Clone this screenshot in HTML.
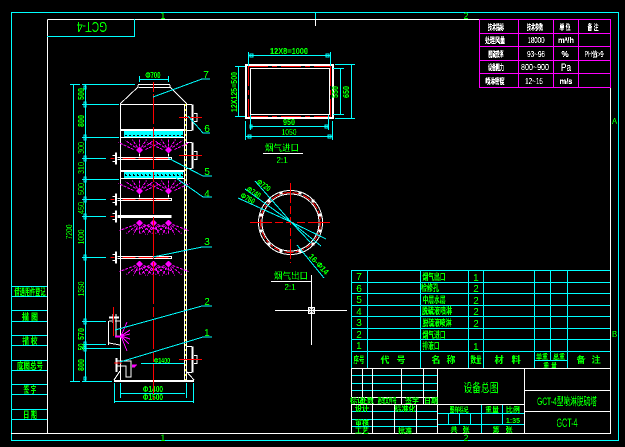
<!DOCTYPE html>
<html><head><meta charset="utf-8"><style>
html,body{margin:0;padding:0;background:#000;width:625px;height:447px;overflow:hidden}
svg{display:block}
.c{stroke:#0ff}.w{stroke:#fff}.r{stroke:#f00}.m{stroke:#f0f}
path,line,rect,circle{fill:none;stroke-width:1;shape-rendering:crispEdges}
text{font-family:"Liberation Sans","Noto Sans CJK SC",sans-serif;text-anchor:middle;font-size:9px}
.g{fill:#0f0}.gb{fill:#0f0;font-weight:bold}.wt{fill:#fff;font-weight:bold;font-size:8px}.wn{fill:#fff;font-size:8px}
</style></head><body>
<svg width="625" height="447" viewBox="0 0 625 447" xmlns="http://www.w3.org/2000/svg">
<defs>
<filter id="a" x="0" y="0" width="625" height="447" filterUnits="userSpaceOnUse" color-interpolation-filters="sRGB">
<feComponentTransfer><feFuncA type="discrete" tableValues="0 0 1 1 1"/></feComponentTransfer></filter>
<g id="fu"><path class="m" d="M-6-2L-21-9M-4-4L-14-11M-2-4L-7-12M0-5V-13M2-4L7-12M4-4L14-11M6-2L21-9" stroke-dasharray="3 1"/><path class="m" d="M-3-1H3M-3-2H3M-2 0H2M-2-3H2M-1 1H1M-1-4H1"/><path class="w" d="M0 2V5"/></g>
<g id="fd"><path class="m" d="M-4 3L-20 9M-3 4L-13 12M-2 5L-6 13M0 5V13M2 5L6 13M3 4L13 12M4 3L20 9" stroke-dasharray="3 1"/><path class="m" d="M-3 1H3M-3 2H3M-2 0H2M-2 3H2M-1-1H1M-1 4H1"/></g>
<g id="flange"><path class="w" d="M0 0H6M0 26H6M6 0V26M7 0V26M8 9H11V17H8"/><path class="r" d="M-7 13H16"/></g>
<g id="pipe"><path class="w" d="M115-6V6M116-6V6M112-3H115M112 3H115"/><path class="r" d="M110 0H114"/><path class="w" d="M117-1H171V1H117M171-1V1M120-3V-1M120 1V3"/><path class="r" d="M122 0H135M138 0H152M155 0H168"/></g>
<g id="pipew"><path class="w" d="M115-6V6M116-6V6M112-3H115M112 3H115"/><path class="r" d="M110 0H114"/><path class="w" d="M117-1H171M117 0H171M117 1H171M120-3V-1M120 1V3"/></g>
</defs>

<!-- frames -->
<rect class="c" x="11.5" y="12.5" width="607" height="428"/>
<path class="w" d="M47.5 19.5H610.5V433.5H11"/><path class="w" d="M47.5 19.5V433.5"/>
<path class="c" d="M47 36.5H134.5V19"/>
<path class="c" d="M315.5 12V19"/><path class="w" d="M315.5 19V26"/>

<g filter="url(#a)">
<text class="g" x="163" y="19">1</text>
<text class="g" x="466" y="19">2</text>
<text class="g" x="163" y="441">1</text>
<text class="g" x="466" y="441">2</text>
<text class="g" x="614.5" y="124" style="font-size:8px">A</text>
<text class="g" x="614.5" y="337" style="font-size:8px">B</text>
<text class="g" transform="translate(92,22) rotate(180)" style="font-size:15px" textLength="30" lengthAdjust="spacingAndGlyphs">GCT-4</text>
</g>

<!-- magenta table -->
<path class="m" d="M479.5 19.5H610.5V87.5H479.5ZM479 33.5H610M479 46.5H610M479 60.5H610M479 73.5H610M518.5 19V87M553.5 19V87M578.5 19V87"/>
<g filter="url(#a)">
<text class="wt" x="496" y="30" textLength="16" lengthAdjust="spacingAndGlyphs">技术指标</text><text class="wt" x="535" y="30" textLength="16" lengthAdjust="spacingAndGlyphs">技术参数</text><text class="wt" x="565" y="30" textLength="11" lengthAdjust="spacingAndGlyphs">单 位</text><text class="wt" x="593" y="30" textLength="11" lengthAdjust="spacingAndGlyphs">备 注</text>
<text class="wt" x="495" y="43" textLength="20" lengthAdjust="spacingAndGlyphs">处理风量</text><text class="wn" x="536" y="43" textLength="17" lengthAdjust="spacingAndGlyphs">18000</text><text class="wn" x="566" y="43" style="font-weight:bold" textLength="16" lengthAdjust="spacingAndGlyphs">m³/h</text>
<text class="wt" x="496" y="57" textLength="15" lengthAdjust="spacingAndGlyphs">脱硫效率</text><text class="wn" x="536" y="57" textLength="18" lengthAdjust="spacingAndGlyphs">93~96</text><text class="wt" x="565" y="57">%</text><text class="wn" x="594" y="57" textLength="19" lengthAdjust="spacingAndGlyphs">PH值&gt;9</text>
<text class="wt" x="496" y="70" textLength="16" lengthAdjust="spacingAndGlyphs">设备阻力</text><text class="wn" x="535" y="70" textLength="28" lengthAdjust="spacingAndGlyphs">800~900</text><text class="wn" x="566" y="71" style="font-size:11px" textLength="10" lengthAdjust="spacingAndGlyphs">Pa</text>
<text class="wt" x="495" y="84" textLength="19" lengthAdjust="spacingAndGlyphs">喷淋密度</text><text class="wn" x="534" y="84" textLength="18" lengthAdjust="spacingAndGlyphs">12~15</text><text class="wn" x="566" y="84" style="font-weight:bold" textLength="13" lengthAdjust="spacingAndGlyphs">m/s</text>
</g>

<!-- rectangular flange -->
<path class="w" d="M245.5 64.5H333.5V118.5H245.5ZM246.5 65.5H332.5V117.5H246.5Z"/>
<path class="r" d="M248 66.5H330M248 116.5H330M248.5 66V117M330.5 66V117" stroke-dasharray="20 4 5 4"/>
<rect class="w" x="250.5" y="68.5" width="79" height="46"/>
<path class="c" d="M248.5 52V66M330.5 52V66M248 55.5H330M250.5 115V130M328.5 115V130M250 126.5H329M245.5 121V140M332.5 121V140M245 136.5H333M235 66.5H245M235 116.5H245M238.5 66V116M333 68.5H344M333 114.5H344M340.5 68V114M335 64.5H355M335 118.5H355M351.5 64V118"/>
<path class="c" d="M250 54h3v3h-3zM326 54h3v3h-3zM250 125h2v3h-2zM325 125h3v3h-3zM248 135h3v3h-3zM328 135h3v3h-3z"/>
<g filter="url(#a)">
<text class="g" x="289" y="54" textLength="38" lengthAdjust="spacingAndGlyphs" style="font-size:8px;font-weight:bold">12X8=1000</text>
<text class="g" x="289" y="125" textLength="12" lengthAdjust="spacingAndGlyphs" style="font-size:8px;font-weight:bold">950</text>
<text class="g" x="289" y="135" textLength="15" lengthAdjust="spacingAndGlyphs" style="font-size:8px">1050</text>
<text class="g" transform="translate(237,92) rotate(-90)" textLength="40" lengthAdjust="spacingAndGlyphs" style="font-size:8px;font-weight:bold">12X125=500</text>
<text class="g" transform="translate(338,92) rotate(-90)" textLength="12" lengthAdjust="spacingAndGlyphs" style="font-size:8px;font-weight:bold">550</text>
<text class="g" transform="translate(349,92) rotate(-90)" textLength="12" lengthAdjust="spacingAndGlyphs" style="font-size:8px;font-weight:bold">650</text>
<text class="g" x="282" y="151" textLength="34" lengthAdjust="spacingAndGlyphs" style="font-size:9px">烟气进口</text>
<text class="g" x="282" y="163" style="font-size:8px">2:1</text>
<text class="g" x="291" y="279" textLength="34" lengthAdjust="spacingAndGlyphs" style="font-size:9px">烟气出口</text>
<text class="g" x="290" y="290" style="font-size:8px">2:1</text>
</g>
<path class="w" d="M263 153.5H303M271 281.5H311"/>

<!-- circle -->
<circle class="r" cx="290.5" cy="222.5" r="30" stroke-dasharray="9 2"/>
<circle class="w" cx="290.5" cy="222.5" r="32"/>
<circle class="w" cx="290.5" cy="222.5" r="28.5"/>
<path class="w" d="M260 214h2v2h-2zM268 200h2v2h-2zM280 192h2v2h-2zM299 192h2v2h-2zM312 200h2v2h-2zM319 214h2v2h-2zM319 230h2v2h-2zM312 243h2v2h-2zM299 250h2v2h-2zM280 250h2v2h-2zM268 243h2v2h-2zM260 230h2v2h-2z" style="fill:#fff"/>
<path class="r" d="M250 222.5H330" stroke-dasharray="22 3 8 3 8 3 8 3"/>
<path class="r" d="M290.5 183V263" stroke-dasharray="20 3 8 3 8 3 8 3"/>
<path class="c" d="M255 181L291 222M245 189L291 222M238 198L291 222M291 222L326 239M291 222L321 246M297 245L324 278M291 222L311 243"/>
<g filter="url(#a)">
<text class="g" transform="translate(264,185) rotate(35)" y="3" textLength="15" lengthAdjust="spacingAndGlyphs" style="font-size:8px;font-weight:bold">Φ720</text>
<text class="g" transform="translate(254,192) rotate(32)" y="3" textLength="15" lengthAdjust="spacingAndGlyphs" style="font-size:8px;font-weight:bold">Φ740</text>
<text class="g" transform="translate(248,198) rotate(28)" y="3" textLength="15" lengthAdjust="spacingAndGlyphs" style="font-size:8px;font-weight:bold">Φ760</text>
<text class="g" transform="translate(319,264) rotate(47)" y="3" textLength="25" lengthAdjust="spacingAndGlyphs" style="font-size:8px;font-weight:bold">16-Φ14</text>
</g>

<!-- crosshair -->
<path class="w" d="M311.5 275V345M275 310.5H347"/>
<rect class="w" x="308.5" y="307.5" width="6" height="6"/>
<circle class="w" cx="311.5" cy="310.5" r="2"/>

<!-- bottom-right table -->
<path class="c" d="M351.5 270.5H610M351.5 282.5H610M351.5 293.5H610M351.5 305.5H610M351.5 316.5H610M351.5 328.5H610M351.5 339.5H610M351.5 351.5H610M534 360.5H567M351.5 270V368M367.5 270V368M420.5 270V368M468.5 270V368M483.5 270V368M534.5 270V368M550.5 270V360M567.5 270V368"/>
<g filter="url(#a)" style="font-size:10px">
<text class="g" x="359" y="280" style="font-size:10px">7</text><text class="g" x="359" y="292" style="font-size:10px">6</text><text class="g" x="359" y="303" style="font-size:10px">5</text><text class="g" x="359" y="315" style="font-size:10px">4</text><text class="g" x="359" y="326" style="font-size:10px">3</text><text class="g" x="359" y="338" style="font-size:10px">2</text><text class="g" x="359" y="349" style="font-size:10px">1</text>
<text class="g" x="476" y="281" style="font-size:10px">1</text><text class="g" x="476" y="292" style="font-size:10px">2</text><text class="g" x="476" y="304" style="font-size:10px">2</text><text class="g" x="476" y="315" style="font-size:10px">2</text><text class="g" x="476" y="327" style="font-size:10px">2</text><text class="g" x="476" y="350" style="font-size:10px">1</text>
<text class="gb" x="434" y="280" textLength="23" lengthAdjust="spacingAndGlyphs">烟气出口</text>
<text class="gb" x="430" y="291" textLength="18" lengthAdjust="spacingAndGlyphs">检修孔</text>
<text class="gb" x="434" y="303" textLength="23" lengthAdjust="spacingAndGlyphs">中层水层</text>
<text class="gb" x="437" y="314" textLength="30" lengthAdjust="spacingAndGlyphs">脱硫液喷淋</text>
<text class="gb" x="437" y="326" textLength="29" lengthAdjust="spacingAndGlyphs">脱硫液喷淋</text>
<text class="gb" x="434" y="338" textLength="23" lengthAdjust="spacingAndGlyphs">烟气进口</text>
<text class="gb" x="431" y="349" textLength="17" lengthAdjust="spacingAndGlyphs">排液口</text>
<text class="gb" x="359" y="363" textLength="11" lengthAdjust="spacingAndGlyphs">序号</text>
<text class="gb" x="385" y="363">代</text><text class="gb" x="401" y="363">号</text>
<text class="gb" x="436" y="363">名</text><text class="gb" x="451" y="363">称</text>
<text class="gb" x="476" y="363" textLength="11" lengthAdjust="spacingAndGlyphs">数量</text>
<text class="gb" x="499" y="363">材</text><text class="gb" x="516" y="363">料</text>
<text class="gb" x="542" y="359" textLength="12" lengthAdjust="spacingAndGlyphs" style="font-size:7px">单重</text><text class="gb" x="559" y="359" textLength="12" lengthAdjust="spacingAndGlyphs" style="font-size:7px">总重</text>
<text class="gb" x="550" y="368" textLength="14" lengthAdjust="spacingAndGlyphs" style="font-size:7px">重 量</text>
<text class="gb" x="581" y="363">备</text><text class="gb" x="596" y="363">注</text>
</g>

<!-- title block -->
<path class="c" d="M351 375.5H437M351 383.5H437M351 390.5H437M351 411.5H437M351 419.5H437M351 426.5H437M437 413.5H524M437 424.5H524M481.5 404V433M502.5 404V424M448.5 413V424M459.5 413V424M470.5 413V424"/>
<path class="w" d="M351 368.5H610M351.5 368V433M437.5 368V433M524.5 368V433M351 404.5H524M351 397.5H437M524 390.5H610M524 411.5H610M610.5 368V433M362.5 368V404M372.5 368V433M401.5 368V404M423.5 368V404M394.5 404V433M416.5 404V433"/>
<g filter="url(#a)">
<text class="g" x="481" y="392" style="font-size:12px" textLength="35" lengthAdjust="spacingAndGlyphs">设备总图</text>
<text class="g" x="567" y="405" textLength="60" lengthAdjust="spacingAndGlyphs" style="font-size:11px">GCT-4型喷淋脱硫塔</text>
<text class="g" x="567" y="427" textLength="21" lengthAdjust="spacingAndGlyphs" style="font-size:12px">GCT-4</text>
<text class="gb" x="357" y="403" style="font-size:7px">标记</text><text class="gb" x="367" y="403" style="font-size:7px">处数</text>
<text class="gb" x="387" y="403" style="font-size:7px" textLength="19" lengthAdjust="spacingAndGlyphs">更改文件号</text><text class="gb" x="412" y="403" style="font-size:7px">签字</text><text class="gb" x="431" y="403" style="font-size:7px">日期</text>
<text class="gb" x="362" y="411" style="font-size:7px">设计</text><text class="gb" x="405" y="411" style="font-size:7px">标准化</text>
<text class="gb" x="362" y="425" style="font-size:7px">审核</text><text class="gb" x="362" y="433" style="font-size:7px">工艺</text><text class="gb" x="405" y="433" style="font-size:7px">批准</text>
<text class="gb" x="459" y="412" style="font-size:7px" textLength="19" lengthAdjust="spacingAndGlyphs">图样标记</text><text class="gb" x="492" y="412" style="font-size:7px">重量</text><text class="gb" x="513" y="412" style="font-size:7px">比例</text>
<text class="g" x="513" y="423" style="font-size:7px;font-weight:bold">1:35</text>
<text class="gb" x="454" y="432" style="font-size:7px">共</text><text class="gb" x="466" y="432" style="font-size:7px">张</text><text class="gb" x="496" y="432" style="font-size:7px">第</text><text class="gb" x="509" y="432" style="font-size:7px">张</text>
</g>

<!-- left strip -->
<path class="c" d="M11 286.5H47M11 296.5H47M11 310.5H47M11 321.5H47M11 335.5H47M11 345.5H47M11 360.5H47M11 370.5H47M11 384.5H47M11 394.5H47M11 409.5H47M11 419.5H47"/>
<g filter="url(#a)">
<text class="gb" x="30" y="295" textLength="31" lengthAdjust="spacingAndGlyphs">借通用件登记</text>
<text class="gb" x="30" y="320" textLength="16" lengthAdjust="spacingAndGlyphs">描 图</text>
<text class="gb" x="30" y="344" textLength="15" lengthAdjust="spacingAndGlyphs">描 校</text>
<text class="gb" x="30" y="369" textLength="26" lengthAdjust="spacingAndGlyphs">底图总号</text>
<text class="gb" x="30" y="393" textLength="13" lengthAdjust="spacingAndGlyphs">签 字</text>
<text class="gb" x="30" y="418" textLength="14" lengthAdjust="spacingAndGlyphs">日 期</text>
</g>

<!-- tower dims -->
<path class="c" d="M70 84.5H80M82 84.5H135M73.5 84V381M85.5 84V381M82 104.5H119M82 137.5H119M82 158.5H106M82 179.5H119M82 199.5H106M82 216.5H106M82 257.5H106M82 321.5H106M82 344.5H106M82 348.5H120M70 381.5H80M82 381.5H112"/>
<path class="c" d="M84 86h2v3h-2zM84 102h2v5h-2zM84 135h2v5h-2zM84 156h2v5h-2zM84 177h2v5h-2zM84 197h2v5h-2zM84 214h2v5h-2zM84 255h2v5h-2zM84 319h2v5h-2zM84 342h2v5h-2zM84 346h2v5h-2zM84 377h2v3h-2z"/>
<path class="c" d="M139.5 76V82M168.5 76V82M140 79.5H168"/>
<g filter="url(#a)">
<text class="gb" transform="translate(84,94) rotate(-90)" textLength="12" lengthAdjust="spacingAndGlyphs" style="font-size:8px">500</text>
<text class="gb" transform="translate(84,121) rotate(-90)" textLength="12" lengthAdjust="spacingAndGlyphs" style="font-size:8px">800</text>
<text class="g" transform="translate(84,148) rotate(-90)" textLength="12" lengthAdjust="spacingAndGlyphs" style="font-size:8px">300</text>
<text class="g" transform="translate(84,168) rotate(-90)" textLength="12" lengthAdjust="spacingAndGlyphs" style="font-size:8px">310</text>
<text class="g" transform="translate(84,189) rotate(-90)" textLength="12" lengthAdjust="spacingAndGlyphs" style="font-size:8px">500</text>
<text class="g" transform="translate(84,208) rotate(-90)" textLength="12" lengthAdjust="spacingAndGlyphs" style="font-size:8px">450</text>
<text class="g" transform="translate(84,237) rotate(-90)" textLength="15" lengthAdjust="spacingAndGlyphs" style="font-size:8px">1000</text>
<text class="g" transform="translate(84,289) rotate(-90)" textLength="15" lengthAdjust="spacingAndGlyphs" style="font-size:8px">1350</text>
<text class="gb" transform="translate(84,334) rotate(-90)" textLength="12" lengthAdjust="spacingAndGlyphs" style="font-size:8px">570</text>
<text class="gb" transform="translate(84,347) rotate(-90)" textLength="7" lengthAdjust="spacingAndGlyphs" style="font-size:8px">50</text>
<text class="gb" transform="translate(84,365) rotate(-90)" textLength="12" lengthAdjust="spacingAndGlyphs" style="font-size:8px">800</text>
<text class="g" transform="translate(72,232) rotate(-90)" textLength="15" lengthAdjust="spacingAndGlyphs" style="font-size:8px">7200</text>
<text class="g" x="153" y="78" textLength="15" lengthAdjust="spacingAndGlyphs" style="font-size:8px;font-weight:bold">Φ700</text>
<text class="g" x="162" y="363" textLength="16" lengthAdjust="spacingAndGlyphs" style="font-size:7px;font-weight:bold">Φ1400</text>
<text class="g" x="153" y="392" textLength="20" lengthAdjust="spacingAndGlyphs" style="font-size:8px;font-weight:bold">Φ1400</text>
<text class="g" x="153" y="400" textLength="20" lengthAdjust="spacingAndGlyphs" style="font-size:8px;font-weight:bold">Φ1500</text>
<text class="g" x="206" y="78" style="font-size:10px">7</text><text class="g" x="207" y="132" style="font-size:10px">6</text><text class="g" x="207" y="175" style="font-size:10px">5</text><text class="g" x="207" y="197" style="font-size:10px">4</text><text class="g" x="207" y="245" style="font-size:10px">3</text><text class="g" x="207" y="305" style="font-size:10px">2</text><text class="g" x="207" y="336" style="font-size:10px">1</text>
</g>

<!-- tower body -->
<path class="w" d="M138 84.5H170M139 87.5H170M138 85V88M170 85V88M138 87L120 104M170 87L187 104M120 104.5H186M120.5 104V380M184.5 104V380M120 129.5H185M120 130.5H185M120 137.5H185M120 170.5H185M120 171.5H185M120 178.5H185"/>
<path d="M186.5 104V380" stroke="#fff"/>
<path d="M185.5 104V380" stroke="#ff0" stroke-dasharray="2 3"/>
<path class="c" d="M124 131.5H183M124 132.5H183M124 133.5H183M124 134.5H183M124 135.5H183M124 136.5H183M124 172.5H183M124 173.5H183M124 174.5H183M124 175.5H183M124 176.5H183M124 177.5H183"/>
<path stroke="#000" d="M125 135.5H183M125 175.5H183" stroke-dasharray="2 2"/>
<path stroke="#000" d="M125 174.5H183" stroke-dasharray="1 3"/>
<use href="#flange" x="186" y="104.5"/>
<use href="#flange" x="186" y="142.5"/>
<use href="#flange" x="186" y="346.5"/>

<use href="#pipe" x=".5" y="158.5"/><use href="#pipe" x=".5" y="199.5"/>
<use href="#pipew" x=".5" y="216.5"/><use href="#pipe" x=".5" y="257.5"/>

<use href="#fu" x="139.5" y="151.5"/><use href="#fu" x="168.5" y="151.5"/>
<use href="#fu" x="139.5" y="192.5"/><use href="#fu" x="168.5" y="192.5"/>
<use href="#fd" x="139.5" y="221.5"/><use href="#fd" x="153.5" y="221.5"/><use href="#fd" x="168.5" y="221.5"/>
<use href="#fd" x="139.5" y="262.5"/><use href="#fd" x="153.5" y="262.5"/><use href="#fd" x="168.5" y="262.5"/>

<!-- lower left nozzle -->
<path class="w" d="M108.5 321V345M120 345L109 343M109 321H112M115 321H120M109 317H119M109 318H119M113 314V323M116 314V336"/>
<path class="r" d="M113.5 307V336"/>
<path class="m" d="M121 336L127 322M121 336L130 330M121 336L130 334M121 336L130 339M121 336L129 344M121 336L127 351M115 336H121M115 337H121"/>
<!-- drain pipe -->
<path class="w" d="M116 358V372M117 358V372M117 361H131V377H126V366H117"/>
<path class="r" d="M114 363H122"/>
<path class="m" d="M132 365H137M132 366H136M132 367H135"/>
<!-- base -->
<path class="w" d="M114 380.5H194M114 381.5H194M120 371L114 380M186 371L194 380"/>
<!-- inner dims -->
<path class="c" d="M141 363.5H184M120.5 383V398M186.5 383V398M114.5 383V403M193.5 383V403M120 393.5H185M114 401.5H193"/>
<!-- center line -->
<path class="r" d="M153.5 82V400" stroke-dasharray="10 2 30 3"/>
<path class="r" d="M179 117.5H202M179 155.5H202M179 359.5H202"/>
<!-- leaders -->
<path class="c" d="M153 97L202 79H210M188 116L203 133H210M168 158L203 176H212M176 178L203 197H212M153 257L202 247H212M115 330L202 306H212M120 362L203 337H212"/>
</svg>
</body></html>
